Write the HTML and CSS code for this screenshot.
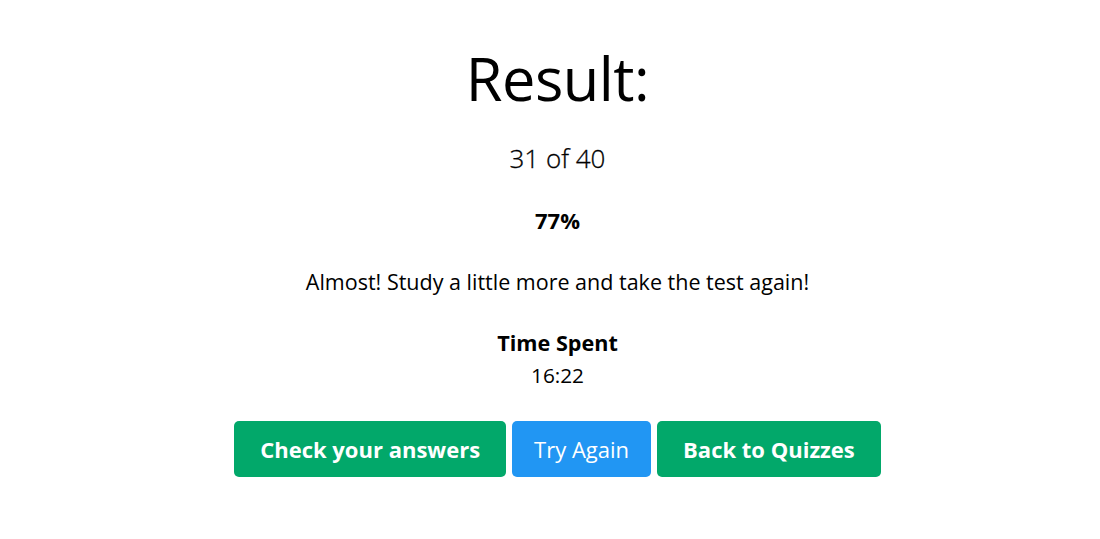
FILE: index.html
```html
<!DOCTYPE html>
<html lang="en">
<head>
<meta charset="utf-8">
<title>Result</title>
<link rel="stylesheet" href="styles.css">
</head>
<body>
<main class="result">
  <h1 class="result-title">Result:</h1>
  <p class="result-score">31 of 40</p>
  <p class="result-percent">77%</p>
  <p class="result-message">Almost! Study a little more and take the test again!</p>
  <div class="result-time">
    <p class="time-label">Time Spent</p>
    <p class="time-value">16:22</p>
  </div>
  <div class="actions">
    <button class="btn btn-green">Check your answers</button>
    <button class="btn btn-blue">Try Again</button>
    <button class="btn btn-green">Back to Quizzes</button>
  </div>
</main>
</body>
</html>
```
FILE: styles.css
```css
html, body {
  margin: 0;
  padding: 0;
  background: #ffffff;
}
body {
  font-family: "Open Sans", "Noto Sans", sans-serif;
  color: #000;
}
.result {
  display: flex;
  flex-direction: column;
  align-items: center;
  padding-top: 38px;
  padding-left: 15px;
}
.result-title {
  margin: 0;
  font-size: 59.5px;
  font-weight: 400;
  line-height: 80px;
  letter-spacing: -0.5px;
}
.result-score {
  margin: 20px 0 0;
  font-size: 26px;
  line-height: 40px;
  font-weight: 300;
  color: #000;
  -webkit-text-stroke: 0.3px #000;
}
.result-percent {
  margin: 28px 0 0;
  font-size: 22px;
  font-weight: 700;
  line-height: 28px;
}
.result-message {
  margin: 34px 0 0;
  font-size: 21.5px;
  font-weight: 400;
  line-height: 28px;
}
.result-time {
  margin-top: 33px;
  display: flex;
  flex-direction: column;
  align-items: center;
}
.time-label {
  margin: 0;
  font-size: 21.6px;
  font-weight: 700;
  line-height: 28px;
}
.time-value {
  margin: 4px 0 0;
  font-size: 20.8px;
  line-height: 28px;
}
.actions {
  margin-top: 32px;
  display: flex;
  gap: 6px;
}
.btn {
  height: 56px;
  border: none;
  border-radius: 5px;
  color: #fff;
  font-family: "Open Sans", "Noto Sans", sans-serif;
  font-size: 22px;
  padding: 0 26px;
  cursor: pointer;
}
.btn-green {
  background: #02a86a;
  font-weight: 700;
}
.btn-blue {
  background: #2196f3;
  font-weight: 400;
  padding: 0 22px;
}
```
